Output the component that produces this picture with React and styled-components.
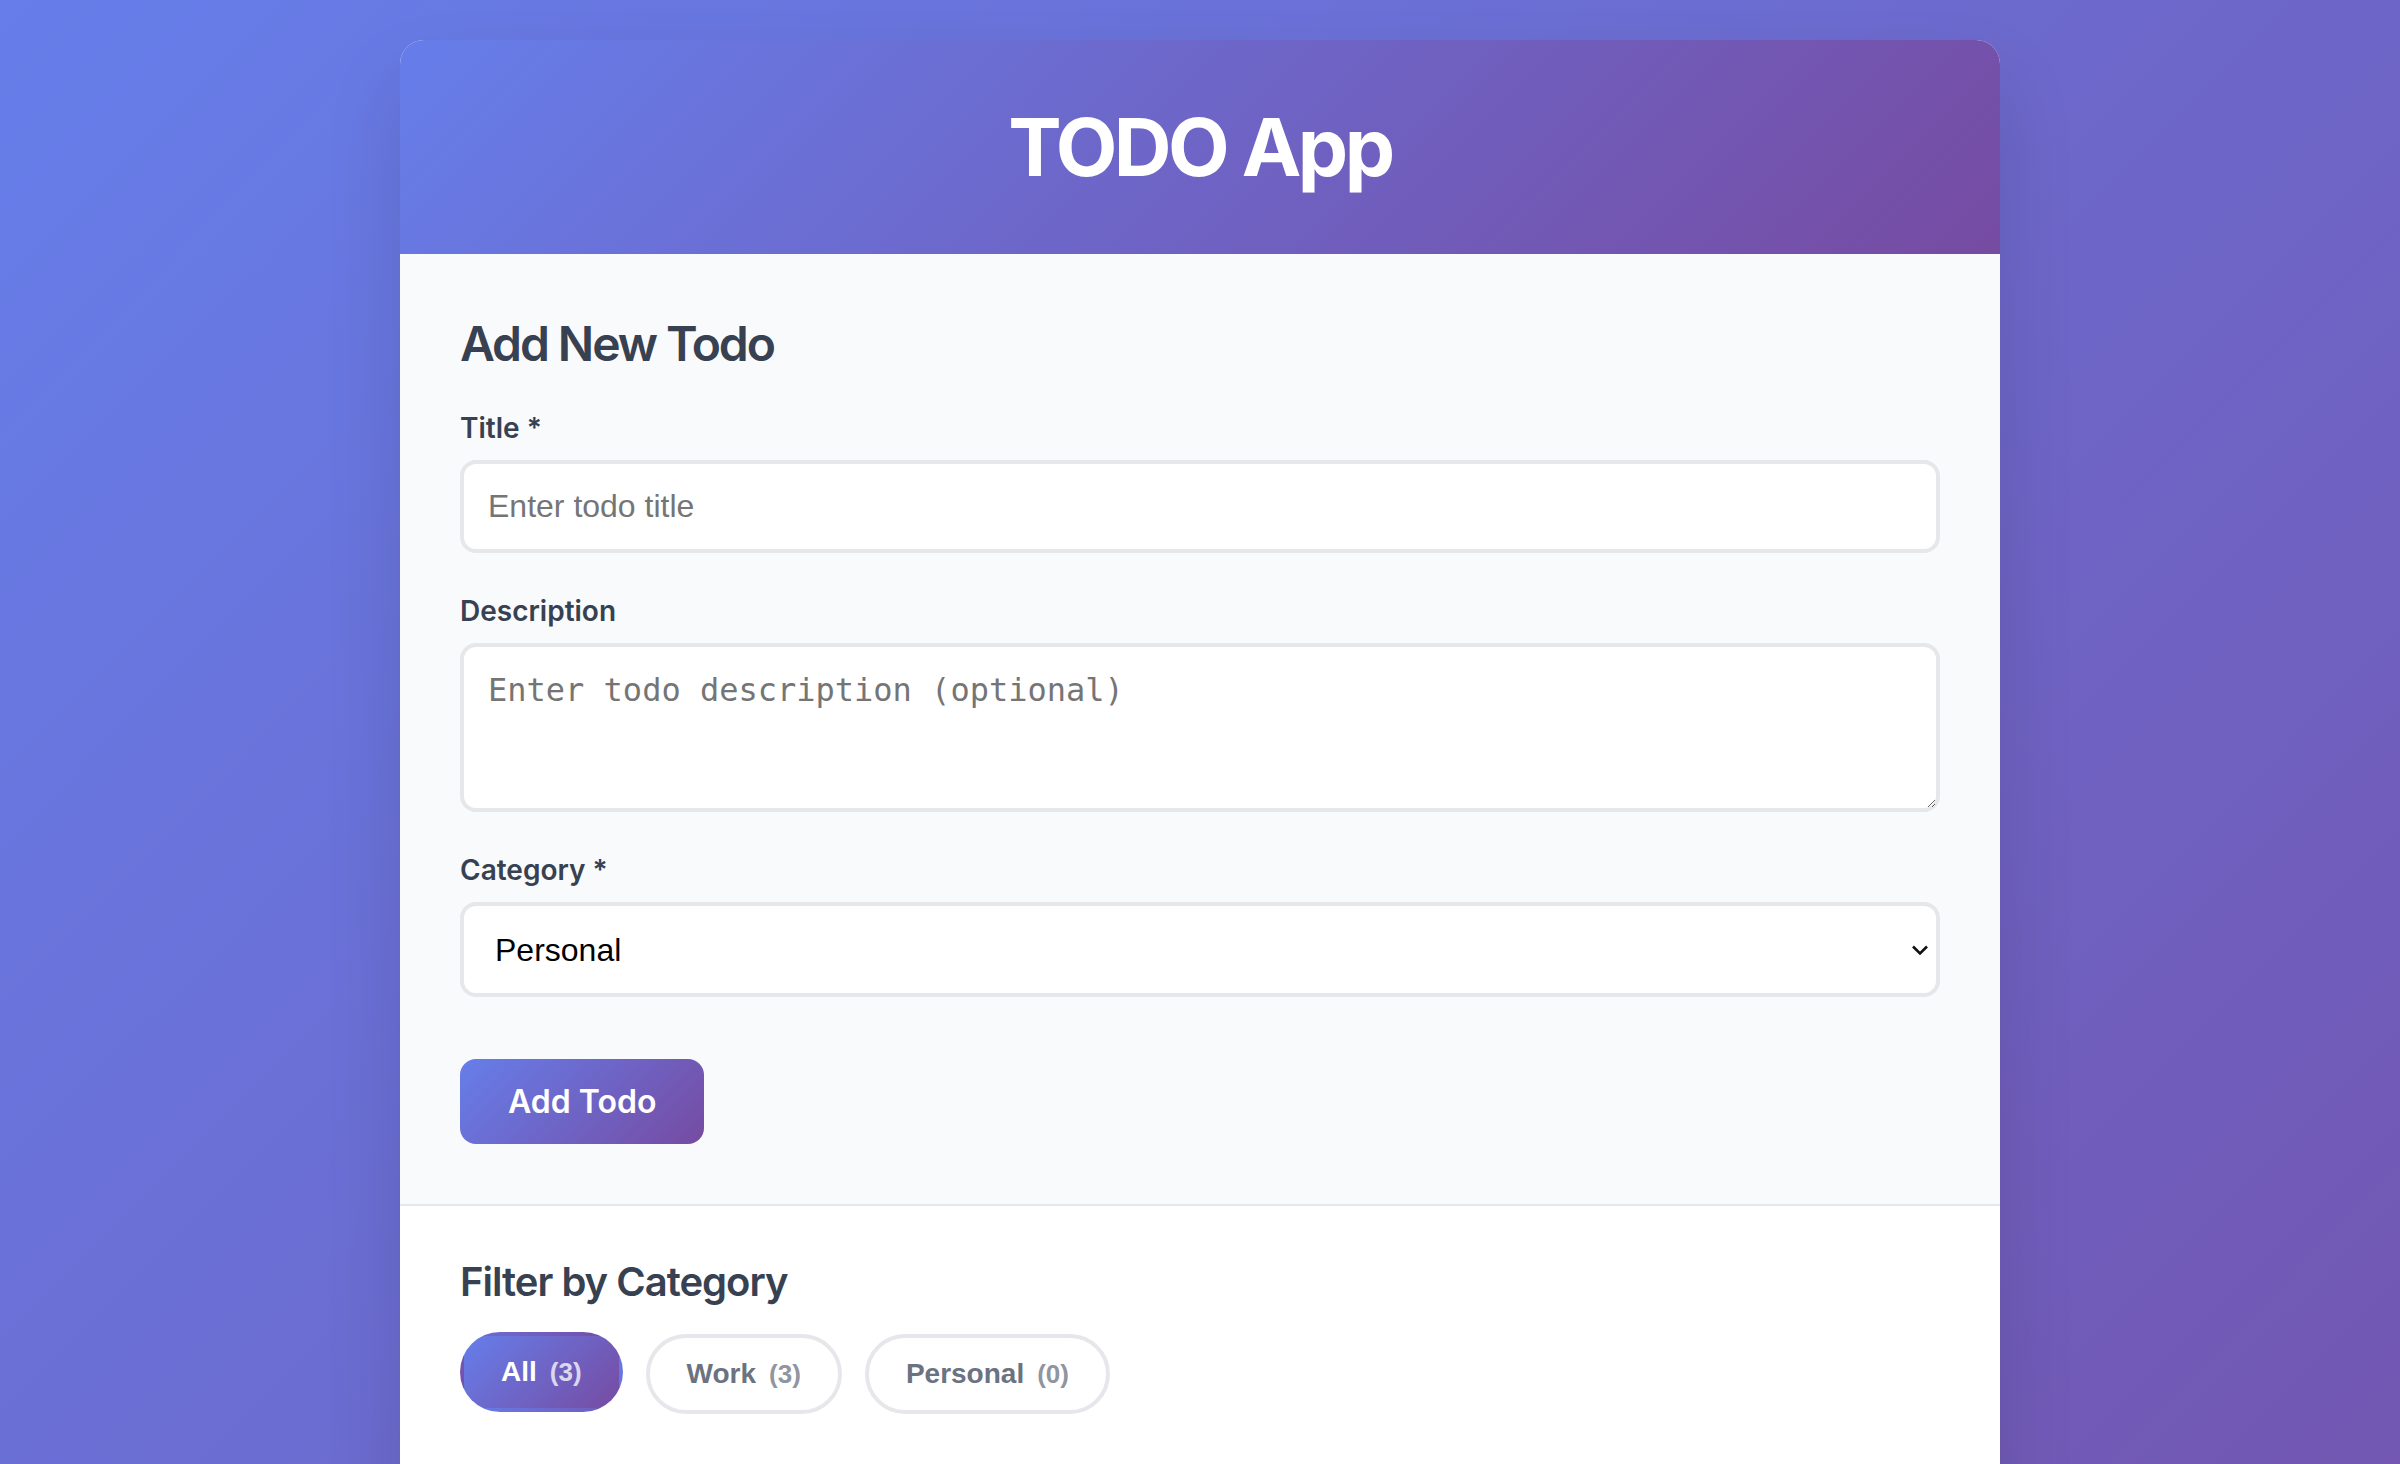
import React, { useState } from "react";
import styled, { createGlobalStyle, css } from "styled-components";

const GlobalStyle = createGlobalStyle`
  * {
    box-sizing: border-box;
  }
  body {
    margin: 0;
    font-family: Inter, "Noto Sans", sans-serif;
  }
`;

const Page = styled.div`
  min-height: 100vh;
  padding: 40px 0;
  background: linear-gradient(135deg, #667eea 0%, #764ba2 100%);
`;

const Card = styled.div`
  width: 1600px;
  margin: 0 auto;
  background: #ffffff;
  border-radius: 24px;
  overflow: hidden;
  box-shadow: 0 40px 80px rgba(0, 0, 0, 0.12);
`;

const Header = styled.header`
  padding: 58px 0;
  text-align: center;
  background: linear-gradient(135deg, #667eea 0%, #764ba2 100%);
`;

const AppTitle = styled.h1`
  margin: 0;
  color: #ffffff;
  font-size: 80px;
  line-height: 98px;
  font-weight: 700;
  letter-spacing: -3.5px;
`;

const FormSection = styled.section`
  padding: 60px;
  background: #f9fafb;
  border-bottom: 2px solid #e5e7eb;
`;

const SectionTitle = styled.h2`
  margin: 0 0 38px;
  color: #374151;
  font-size: 48px;
  font-weight: 600;
  letter-spacing: -2.1px;
`;

const Field = styled.div`
  margin-bottom: 41px;
`;

const Label = styled.label`
  display: block;
  margin-bottom: 15px;
  color: #374151;
  font-size: 28px;
  font-weight: 600;
`;

const fieldBase = css`
  display: block;
  width: 100%;
  border: 4px solid #e5e7eb;
  border-radius: 16px;
  background: #ffffff;
  outline: none;
  color: #111827;
  &::placeholder {
    color: #757575;
  }
`;

const TextInput = styled.input`
  ${fieldBase}
  padding: 24px;
  font-family: "Liberation Sans", Arial, sans-serif;
  font-size: 32px;
  line-height: 37px;
`;

const TextArea = styled.textarea`
  ${fieldBase}
  height: 169px;
  padding: 24px;
  resize: vertical;
  font-family: "DejaVu Sans Mono", monospace;
  font-size: 32px;
`;

const SelectWrap = styled.div`
  position: relative;
`;

const Select = styled.select`
  ${fieldBase}
  appearance: none;
  height: 95px;
  padding: 0 60px 0 31px;
  color: #000000;
  font-family: "Liberation Sans", Arial, sans-serif;
  font-size: 32px;
`;

const Chevron = styled.svg`
  position: absolute;
  right: 11px;
  top: 50%;
  transform: translateY(-50%);
  pointer-events: none;
`;

const PrimaryButton = styled.button`
  margin-top: 21px;
  padding: 24px 48px;
  border: none;
  border-radius: 16px;
  background: linear-gradient(135deg, #667eea 0%, #764ba2 100%);
  color: #ffffff;
  font-family: Inter, sans-serif;
  font-size: 32px;
  line-height: 37px;
  font-weight: 600;
  cursor: pointer;
`;

const FilterSection = styled.section`
  padding: 51px 60px 60px;
`;

const FilterTitle = styled.h3`
  margin: 0 0 28px;
  color: #374151;
  font-size: 40px;
  font-weight: 600;
  letter-spacing: -1px;
`;

const PillRow = styled.div`
  display: flex;
  gap: 23px;
`;

const Pill = styled.button`
  padding: 18px 37px;
  border: 4px solid #e5e7eb;
  border-radius: 999px;
  background: #ffffff;
  color: #6b7280;
  font-family: "Liberation Sans", Arial, sans-serif;
  font-size: 28px;
  line-height: 36px;
  font-weight: 700;
  cursor: pointer;
  ${(p) =>
    p.$active &&
    css`
      border-color: transparent;
      background: linear-gradient(135deg, #667eea 0%, #764ba2 100%);
      color: #ffffff;
      transform: translateY(-2px);
    `}
`;

const Count = styled.span`
  margin-left: 13px;
  font-size: 26px;
  opacity: 0.75;
`;

/* the todo list sits below the fold; it only gives the card its length */
const TodoList = styled.ul`
  min-height: 1100px;
  margin: 0;
  padding: 0 60px 60px;
  list-style: none;
`;

const filters = [
  { key: "All", count: 3 },
  { key: "Work", count: 3 },
  { key: "Personal", count: 0 },
];

export default function App() {
  const [filter, setFilter] = useState("All");
  const [category, setCategory] = useState("Personal");

  return (
    <>
      <GlobalStyle />
      <Page>
        <Card>
          <Header>
            <AppTitle>TODO App</AppTitle>
          </Header>

          <FormSection>
            <SectionTitle>Add New Todo</SectionTitle>
            <Field>
              <Label>Title *</Label>
              <TextInput placeholder="Enter todo title" />
            </Field>
            <Field>
              <Label>Description</Label>
              <TextArea placeholder="Enter todo description (optional)" />
            </Field>
            <Field>
              <Label>Category *</Label>
              <SelectWrap>
                <Select value={category} onChange={(e) => setCategory(e.target.value)}>
                  <option value="Work">Work</option>
                  <option value="Personal">Personal</option>
                </Select>
                <Chevron width="18" height="11" viewBox="0 0 18 11">
                  <path d="M2 2 L9 9 L16 2" fill="none" stroke="#111" strokeWidth="2.6" />
                </Chevron>
              </SelectWrap>
            </Field>
            <PrimaryButton>Add Todo</PrimaryButton>
          </FormSection>

          <FilterSection>
            <FilterTitle>Filter by Category</FilterTitle>
            <PillRow>
              {filters.map((f) => (
                <Pill key={f.key} $active={filter === f.key} onClick={() => setFilter(f.key)}>
                  {f.key}
                  <Count>({f.count})</Count>
                </Pill>
              ))}
            </PillRow>
          </FilterSection>

          <TodoList />
        </Card>
      </Page>
    </>
  );
}
